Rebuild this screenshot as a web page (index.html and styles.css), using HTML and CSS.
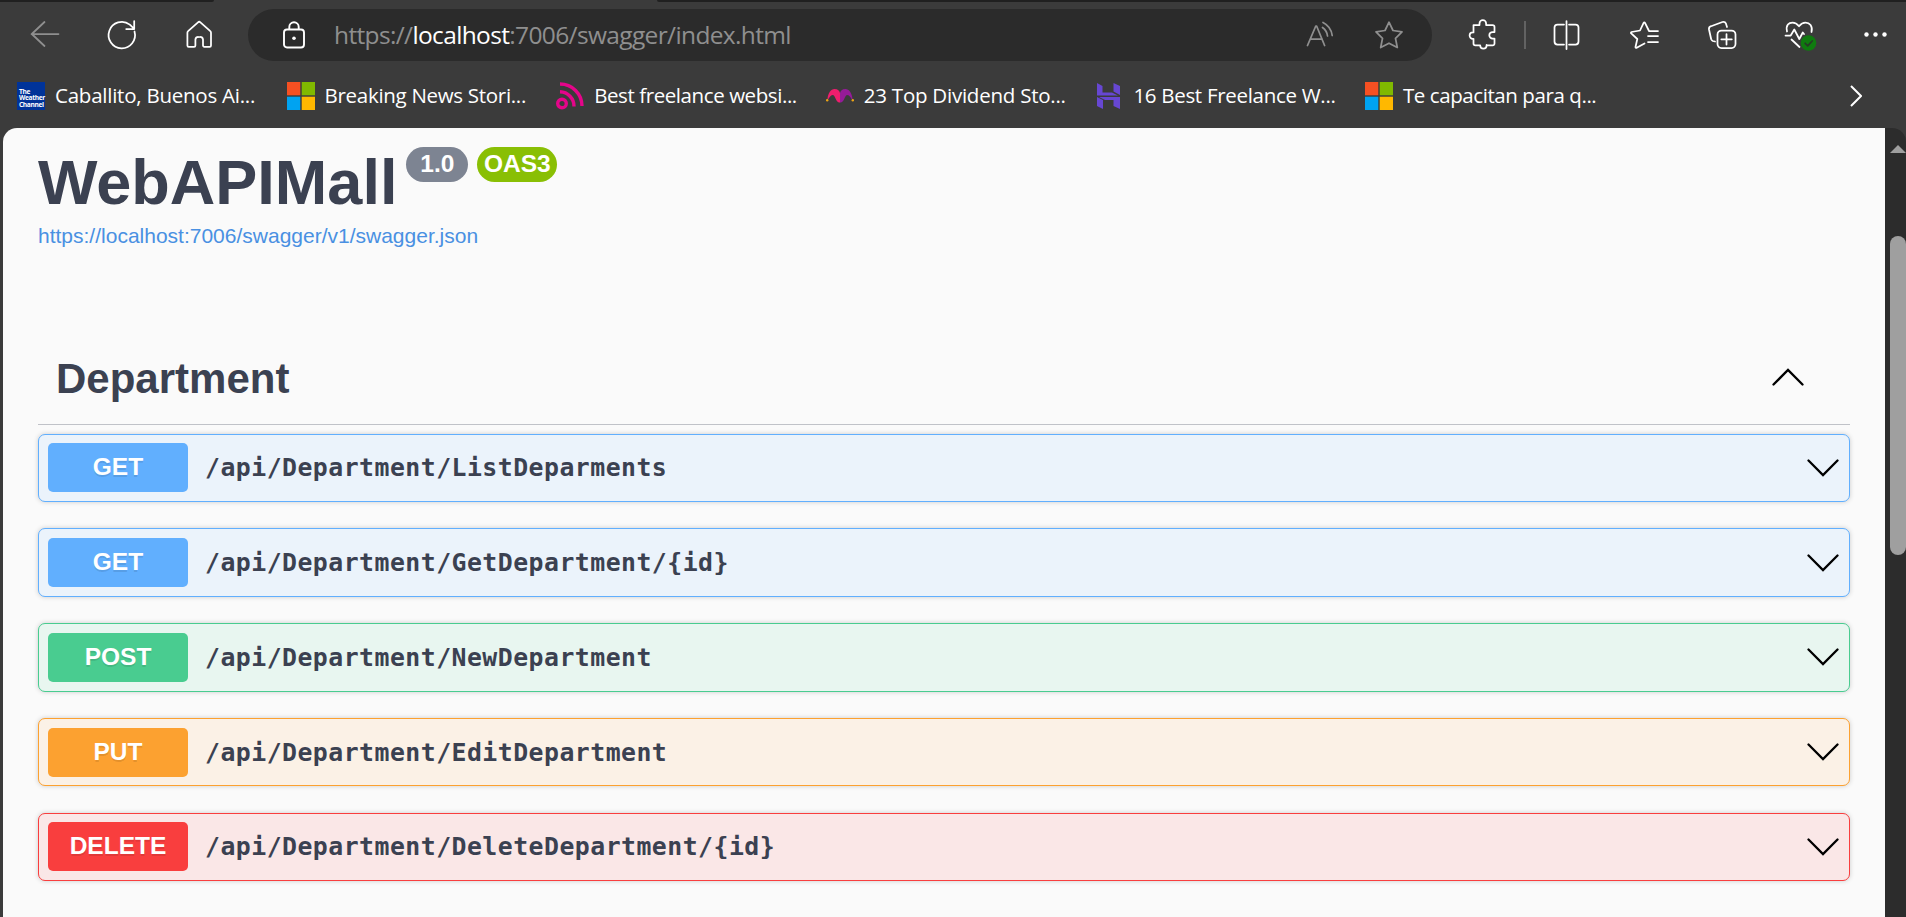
FILE: index.html
```
<!DOCTYPE html>
<html lang="en">
<head>
<meta charset="utf-8">
<title>Swagger UI</title>
<link rel="stylesheet" href="styles.css">
</head>
<body>
<svg class="defs" width="0" height="0">
  <symbol id="arrow-down" viewBox="0 0 32 18"><path d="M1.5 1.5 16 16 30.5 1.5"/></symbol>
  <symbol id="arrow-up" viewBox="0 0 32 18"><path d="M1.5 16.5 16 2 30.5 16.5"/></symbol>
  <symbol id="ms" viewBox="0 0 28 28"><path fill="#f65022" d="M0 0h13.3v13.3H0z"/><path fill="#80b900" d="M14.7 0H28v13.3H14.7z"/><path fill="#00a3f1" d="M0 14.7h13.3V28H0z"/><path fill="#ffb800" d="M14.7 14.7H28V28H14.7z"/></symbol>
</svg>
<header class="chrome">
  <div class="tabstrip"><i class="tabs-left"></i><i class="tabs-right"></i></div>
  <div class="toolbar">
    <nav class="nav">
      <svg class="icon dim" viewBox="0 0 28 28"><path d="M27.500 13H.5M13.500 1 .8 13l12.700 12"/></svg>
      <svg class="icon" viewBox="0 0 28 28"><path d="M26.500 10.500A13.200 13.200 0 1 1 21.800 3.600L26 7.600M26.200 0v8h-8"/></svg>
      <svg class="icon" viewBox="0 0 28 28"><path d="M13 1.300a1.800 1.800 0 0 1 2.400 0L25.300 10.200a2 2 0 0 1 .7 1.500V24.500a1.300 1.300 0 0 1-1.300 1.300H19.300a1.300 1.300 0 0 1-1.300-1.300V18.500a3 3 0 0 0-3-2.500h-1.600a3 3 0 0 0-3 2.500V24.500a1.300 1.300 0 0 1-1.300 1.300H3.700a1.300 1.300 0 0 1-1.300-1.300V11.700a2 2 0 0 1 .7-1.500z"/></svg>
    </nav>
    <div class="address">
      <svg class="lock" viewBox="0 0 22 28"><rect x="1" y="8.500" width="20" height="18" rx="3"/><path d="M6.300 8.500V6a4.700 4.700 0 0 1 9.400 0v2.500"/><circle class="solid" cx="11" cy="17.300" r="1.800"/></svg>
      <span class="url">https://<b>localhost</b>:7006/swagger/index.html</span>
      <svg class="icon dim" viewBox="0 0 28 28"><path d="M.5 24.500 8.800 5h.8l8 19.500M3.300 18h11.800M15.500 6.500a12 12 0 0 1 5 8.500M16 1.500A17 17 0 0 1 25.200 14.500"/></svg>
      <svg class="icon dim" viewBox="0 0 28 28"><path d="M14 1.200 18 9.500 27 10.800 20.500 17.300 22.300 26.500 14 22.200 5.700 26.500 7.500 17.300 1 10.800 10 9.500z"/></svg>
    </div>
    <div class="tools">
      <svg class="icon" viewBox="0 0 28 28"><path d="M4.500 5.500h6V4a3.300 3.300 0 0 1 6.600 0v1.500h6.400a2 2 0 0 1 2 2v5h-1.900a3.300 3.300 0 0 0 0 6.600h1.900v5a1.800 1.800 0 0 1-1.800 1.800h-6.100v-.6a3.200 3.200 0 0 0 0 .6a3.200 3.200 0 0 1-6.400 0H6.300a1.800 1.800 0 0 1-1.800-1.800v-4.800H3.800a3.200 3.200 0 0 1 0-6.400h.7z" transform="translate(0 -1.500)"/></svg>
      <i class="divider"></i>
      <svg class="icon" viewBox="0 0 28 28"><path d="M11 3.500H4.500a3 3 0 0 0-3 3v14a3 3 0 0 0 3 3H11M16 3.500h6.500a3 3 0 0 1 3 3v14a3 3 0 0 1-3 3H16M13.500 0v28"/></svg>
      <svg class="icon" viewBox="0 0 28 28"><path d="M28 10H19L15 1.800a.8.8 0 0 0-1.400 0L10 9.500 1.500 11a.8.8 0 0 0-.3 1.400L7.300 18 5.500 26a.8.8 0 0 0 1.200.8L14.500 22.500M18 15h10M18 21h10"/></svg>
      <svg class="icon" viewBox="0 0 28 28"><rect x="9.500" y="9.500" width="18" height="17.500" rx="4"/><path d="M18.500 13v10.500M13.300 18.300h10.500M7 20.500 4.800 20a3 3 0 0 1-1.600-1.700L1 8.500a3 3 0 0 1 2-3.300L14.500 1a3 3 0 0 1 3.500 1.700L19 6"/></svg>
      <svg class="icon health" viewBox="0 0 28 32"><path d="M2 10.500C.5 4 4 1.500 7.500 1.500c3 0 4.800 1.500 6.500 3.700 1.700-2.200 3.500-3.700 6.500-3.700 4 0 7.500 3.500 6 9.500M.5 14.500h5.200l3.600-6 5 9.500 3.500-6.500 1.200 1.500M6.500 18.500 14.500 26"/><circle class="ok" cx="23.500" cy="22" r="7.800"/><path class="tick" d="m20.200 22.300 2.500 2.500 4.500-4.800"/></svg>
      <svg class="icon" viewBox="0 0 28 28"><g class="solid"><circle cx="4.500" cy="13.500" r="2.200"/><circle cx="13.500" cy="13.500" r="2.200"/><circle cx="22.500" cy="13.500" r="2.200"/></g></svg>
    </div>
  </div>
  <div class="bookmarks">
    <a class="mark"><span class="weather"><span>The</span><span>Weather</span><span>Channel</span></span><span class="label wide">Caballito, Buenos Ai...</span></a>
    <a class="mark"><svg class="fav"><use href="#ms"/></svg><span class="label">Breaking News Stori...</span></a>
    <a class="mark"><svg class="fav rss" viewBox="0 0 28 28"><circle cx="6" cy="21.500" r="4.300"/><path d="M4 9.800A14.500 14.500 0 0 1 18 24.500M4 2A22 22 0 0 1 26 24"/></svg><span class="label tight">Best freelance websi...</span></a>
    <a class="mark"><svg class="fav" viewBox="0 0 28 28"><path fill="#ef1e6d" d="M1.500 17C2 11 5 7 8.500 7S13.500 9 14 11v9.500h-1C10 20 9.500 14 7 13c-2 0-3.500 2-4.500 4z"/><path fill="#951b98" d="M26.500 17C26 11 23 7 19.500 7S14.500 9 14 11v9.500h1c3-.5 3.500-6.500 6-7.500 2 0 3.500 2 4.500 4z"/><circle cx="1.200" cy="18.300" r="1.200" fill="#eda515"/><circle cx="26.800" cy="18.300" r="1.200" fill="#eda515"/></svg><span class="label wide">23 Top Dividend Sto...</span></a>
    <a class="mark"><svg class="fav" viewBox="0 0 28 28"><path fill="#6747d3" d="M2 1 7.500 4v6.500H17l6 3H2zM18.500 1 25 4v9l-6.500-3.500zM25 27l-6.500-3v-6H10L4 15h21zM8 27 2 24v-9l6 3z"/></svg><span class="label">16 Best Freelance W...</span></a>
    <a class="mark"><svg class="fav"><use href="#ms"/></svg><span class="label tight">Te capacitan para q...</span></a>
    <svg class="more" viewBox="0 0 12 22"><path d="m1 1 10 10L1 21"/></svg>
  </div>
</header>
<div class="viewport">
  <main class="page">
    <div class="info">
      <h1>WebAPIMall</h1>
      <span class="version">1.0</span>
      <span class="version oas">OAS3</span>
    </div>
    <a class="spec">https://localhost:7006/swagger/v1/swagger.json</a>
    <h2 class="tag"><span>Department</span><svg class="arrow"><use href="#arrow-up"/></svg></h2>
    <section class="ops">
      <div class="op get"><span class="method">GET</span><span class="path">/api/Department/ListDeparments</span><svg class="arrow"><use href="#arrow-down"/></svg></div>
      <div class="op get"><span class="method">GET</span><span class="path">/api/Department/GetDepartment/{id}</span><svg class="arrow"><use href="#arrow-down"/></svg></div>
      <div class="op post"><span class="method">POST</span><span class="path">/api/Department/NewDepartment</span><svg class="arrow"><use href="#arrow-down"/></svg></div>
      <div class="op put"><span class="method">PUT</span><span class="path">/api/Department/EditDepartment</span><svg class="arrow"><use href="#arrow-down"/></svg></div>
      <div class="op delete"><span class="method">DELETE</span><span class="path">/api/Department/DeleteDepartment/{id}</span><svg class="arrow"><use href="#arrow-down"/></svg></div>
    </section>
  </main>
  <div class="scrollbar"><svg class="up" viewBox="0 0 16 8"><path d="M8 0 16 8H0z"/></svg><i class="thumb"></i></div>
</div>
</body>
</html>
```
FILE: styles.css
```
* { box-sizing: border-box; }
body {
  margin: 0;
  width: 1906px;
  height: 917px;
  overflow: hidden;
  display: flex;
  flex-direction: column;
  background: #3b3b3b;
  font-family: "Liberation Sans", Arial, sans-serif;
}
.defs { display: none; }

/* Browser chrome */
.chrome {
  height: 128px;
  flex: none;
  font-family: "Open Sans", "Noto Sans", sans-serif;
  color: #fff;
}
.tabstrip { display: flex; justify-content: space-between; height: 2px; }
.tabs-left { width: 214px; background: #202020; border-bottom-right-radius: 2px; }
.tabs-right { width: 1249px; background: #202020; border-bottom-left-radius: 2px; }
.toolbar { display: flex; align-items: center; height: 52px; margin-top: 7px; }
.icon {
  width: 28px;
  height: 28px;
  flex: none;
  overflow: visible;
  fill: none;
  stroke: #fff;
  stroke-width: 1.75;
  stroke-linecap: round;
  stroke-linejoin: round;
}
.icon.dim { stroke: #8f8f8f; }
.solid { fill: #fff; stroke: none; }
.nav { display: flex; gap: 49px; width: 248px; padding-left: 31px; }
.address {
  display: flex;
  align-items: center;
  width: 1184px;
  height: 52px;
  padding: 0 29px 0 35px;
  border-radius: 26px;
  background: #2b2b2b;
}
.address .icon { margin-left: 40px; }
.lock { width: 22px; height: 28px; fill: none; stroke: #fff; stroke-width: 1.9; }
.url {
  flex: 1;
  margin-left: 29px;
  padding-bottom: 2px;
  font-size: 24.5px;
  letter-spacing: -0.64px;
  color: #8f8f8f;
  white-space: nowrap;
}
.url b { font-weight: 400; color: #fff; }
.tools { display: flex; align-items: center; gap: 49.4px; margin-left: 37px; }
.divider { width: 2px; height: 28px; margin: 0 -22.5px; background: #626262; }
.health { height: 32px; margin-top: 4px; }
.ok { fill: #0f7b0f; stroke: none; }
.tick { stroke: #263b26; }

.bookmarks { display: flex; align-items: center; height: 56px; margin-top: 7px; padding-left: 17px; }
.mark {
  display: flex;
  align-items: center;
  gap: 10px;
  width: 269.6px;
  flex: none;
  font-size: 20.5px;
  white-space: nowrap;
}
.label { padding-bottom: 2px; letter-spacing: -0.3px; }
.label.wide { letter-spacing: -0.24px; }
.label.tight { letter-spacing: -0.42px; }
.fav { width: 28px; height: 28px; flex: none; }
.rss { fill: none; stroke: #e5058a; stroke-width: 3.4; }
.weather {
  display: flex;
  flex-direction: column;
  justify-content: flex-end;
  width: 28px;
  height: 28px;
  padding: 0 0 1px 2px;
  background: #003399;
  font-size: 6.6px;
  font-weight: 700;
  line-height: 6.8px;
  letter-spacing: -0.35px;
}
.more { width: 12px; height: 22px; margin-left: 215px; fill: none; stroke: #fff; stroke-width: 2; }

/* Swagger page */
.viewport { display: flex; flex: 1; padding-left: 3px; background: linear-gradient(90deg, #3b3b3b 1800px, #2c2c2c 1800px); }
.page {
  width: 1882px;
  padding: 19px 35px 0;
  background: #fafafa;
  border-radius: 14px 0 0 0;
  color: #3b4151;
}
.info { display: flex; align-items: flex-start; height: 75px; }
h1 { margin: 0 9px 0 0; font-size: 63px; line-height: 70px; }
.version {
  height: 35px;
  width: 62px;
  margin-right: 9px;
  border-radius: 18px;
  background: #7d8492;
  color: #fff;
  font-size: 24.5px;
  font-weight: 700;
  line-height: 34px;
  text-align: center;
}
.version.oas { width: 80px; background: #89bf04; }
.spec { display: block; font-size: 21px; line-height: 28px; color: #4990e2; }
.tag {
  display: flex;
  align-items: center;
  justify-content: space-between;
  height: 91px;
  margin: 84px 0 0;
  padding: 0 46px 0 18px;
  border-bottom: 1px solid #c0c2c8;
  font-size: 42px;
}
.arrow { width: 32px; height: 18px; flex: none; fill: none; stroke: #000; stroke-width: 2.3; stroke-linecap: round; }
.tag .arrow { margin-bottom: 4px; }
.ops { display: flex; flex-direction: column; gap: 26.25px; padding-top: 8.6px; }
.op {
  display: flex;
  align-items: center;
  height: 68.5px;
  padding: 0 10px 0 9px;
  border: 1px solid;
  border-radius: 7px;
  box-shadow: 0 0 5px rgba(0, 0, 0, .19);
}
.method {
  width: 140px;
  height: 49px;
  border-radius: 5px;
  color: #fff;
  font-size: 24.5px;
  font-weight: 700;
  line-height: 48px;
  text-align: center;
  text-shadow: 0 2px 0 rgba(0, 0, 0, .1);
}
.path {
  flex: 1;
  margin-left: 17px;
  font-family: "DejaVu Sans Mono", monospace;
  font-size: 24.8px;
  font-weight: 700;
  letter-spacing: 0.48px;
}
.get { border-color: #61affe; background: #ebf3fb; }
.get .method { background: #61affe; }
.post { border-color: #49cc90; background: #e8f6f0; }
.post .method { background: #49cc90; }
.put { border-color: #fca130; background: #fbf1e6; }
.put .method { background: #fca130; }
.delete { border-color: #f93e3e; background: #fae7e7; }
.delete .method { background: #f93e3e; }

.scrollbar { display: flex; flex-direction: column; align-items: flex-end; width: 21px; padding-top: 17px; background: #2c2c2c; border-top-right-radius: 14px; }
.viewport { background: #3b3b3b; }
.up { width: 16px; height: 8px; fill: #9f9f9f; }
.thumb { width: 16px; height: 319px; margin-top: 83px; border-radius: 8px; background: #9f9f9f; }
```
